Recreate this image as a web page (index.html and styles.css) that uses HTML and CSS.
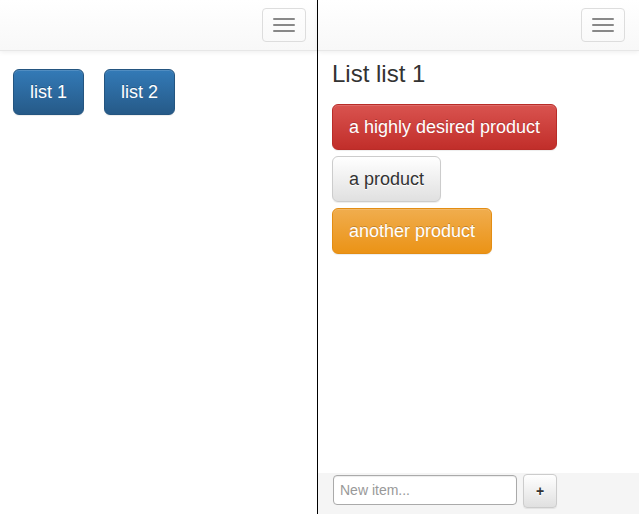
FILE: index.html
```html
<!DOCTYPE html>
<html>
<head>
<meta charset="utf-8">
<link rel="stylesheet" href="styles.css">
</head>
<body>
<div class="app">
  <div class="pane pane-left">
    <div class="navbar navbar-left">
      <button class="toggle" type="button"><span class="bar"></span><span class="bar"></span><span class="bar"></span></button>
    </div>
    <div class="lists">
      <button class="btn btn-lg btn-primary">list 1</button>
      <button class="btn btn-lg btn-primary">list 2</button>
    </div>
  </div>
  <div class="divider"></div>
  <div class="pane pane-right">
    <div class="navbar navbar-right">
      <button class="toggle" type="button"><span class="bar"></span><span class="bar"></span><span class="bar"></span></button>
    </div>
    <div class="content">
      <h3 class="title">List list 1</h3>
      <div class="items">
        <button class="btn btn-lg btn-danger">a highly desired product</button>
        <button class="btn btn-lg btn-default">a product</button>
        <button class="btn btn-lg btn-warning">another product</button>
      </div>
    </div>
    <div class="footer">
      <input class="new-item" type="text" placeholder="New item...">
      <button class="btn btn-add btn-default">+</button>
    </div>
  </div>
</div>
</body>
</html>
```
FILE: styles.css
```css
* { box-sizing: border-box; }
html, body { margin: 0; padding: 0; }
body {
  font-family: "Liberation Sans", Arial, sans-serif;
  font-size: 14px;
  color: #333;
  background: #fff;
}
.app {
  display: flex;
  width: 639px;
  height: 514px;
  overflow: hidden;
}
.pane {
  display: flex;
  flex-direction: column;
  height: 100%;
}
.pane-left { width: 317px; }
.divider { width: 1px; background: #000; }
.pane-right { flex: 1; }

.navbar {
  height: 51px;
  flex: none;
  display: flex;
  justify-content: flex-end;
  align-items: flex-start;
  background: linear-gradient(to bottom, #fff 0, #f8f8f8 100%);
  border-bottom: 1px solid #e7e7e7;
  box-shadow: inset 0 1px 0 rgba(255,255,255,.15), 0 1px 5px rgba(0,0,0,.075);
  position: relative;
  z-index: 1;
}
.navbar-left { padding-right: 11px; }
.navbar-right { padding-right: 14px; }
.toggle {
  margin-top: 8px;
  width: 44px;
  height: 34px;
  padding: 9px 10px;
  background: transparent;
  border: 1px solid #ddd;
  border-radius: 4px;
  display: flex;
  flex-direction: column;
  gap: 4px;
}
.toggle .bar {
  display: block;
  width: 22px;
  height: 2px;
  border-radius: 1px;
  background: #888;
}

.btn {
  font-family: "Liberation Sans", Arial, sans-serif;
  display: inline-block;
  border: 1px solid transparent;
  cursor: pointer;
  white-space: nowrap;
  box-shadow: inset 0 1px 0 rgba(255,255,255,.15), 0 1px 1px rgba(0,0,0,.075);
}
.btn-lg {
  padding: 10px 16px;
  font-size: 18px;
  line-height: 24px;
  height: 46px;
  border-radius: 6px;
}
.btn-primary {
  color: #fff;
  text-shadow: 0 -1px 0 rgba(0,0,0,.2);
  background: linear-gradient(to bottom, #337ab7 0, #265a88 100%);
  border-color: #245580;
}
.btn-danger {
  color: #fff;
  text-shadow: 0 -1px 0 rgba(0,0,0,.2);
  background: linear-gradient(to bottom, #d9534f 0, #c12e2a 100%);
  border-color: #b92c28;
}
.btn-warning {
  color: #fff;
  text-shadow: 0 -1px 0 rgba(0,0,0,.2);
  background: linear-gradient(to bottom, #f0ad4e 0, #eb9316 100%);
  border-color: #e38d13;
}
.btn-default {
  color: #333;
  text-shadow: 0 1px 0 #fff;
  background: linear-gradient(to bottom, #fff 0, #e0e0e0 100%);
  border-color: #ccc;
}

.lists {
  display: flex;
  gap: 20px;
  padding: 18px 13px 0;
}

.content {
  flex: 1;
  padding: 0 14px;
}
.title {
  font-size: 24px;
  font-weight: 500;
  line-height: 26px;
  margin: 10px 0 17px;
  color: #333;
}
.items {
  display: flex;
  flex-direction: column;
  align-items: flex-start;
  gap: 6px;
}

.footer {
  flex: none;
  height: 41px;
  background: #f5f5f5;
  display: flex;
  align-items: flex-start;
  padding: 1px 0 0 15px;
  gap: 6px;
}
.new-item {
  margin-top: 1px;
  width: 184px;
  height: 30px;
  padding: 4px 6px;
  font-family: "Liberation Sans", Arial, sans-serif;
  font-size: 14px;
  color: #555;
  background: #fff;
  border: 1px solid #aaa;
  border-radius: 4px;
  box-shadow: inset 0 1px 1px rgba(0,0,0,.075);
}
.new-item::placeholder { color: #999; }
.btn-add {
  width: 34px;
  height: 34px;
  padding: 6px 0;
  font-size: 14px;
  font-weight: bold;
  line-height: 20px;
  border-radius: 4px;
  text-align: center;
}
```
